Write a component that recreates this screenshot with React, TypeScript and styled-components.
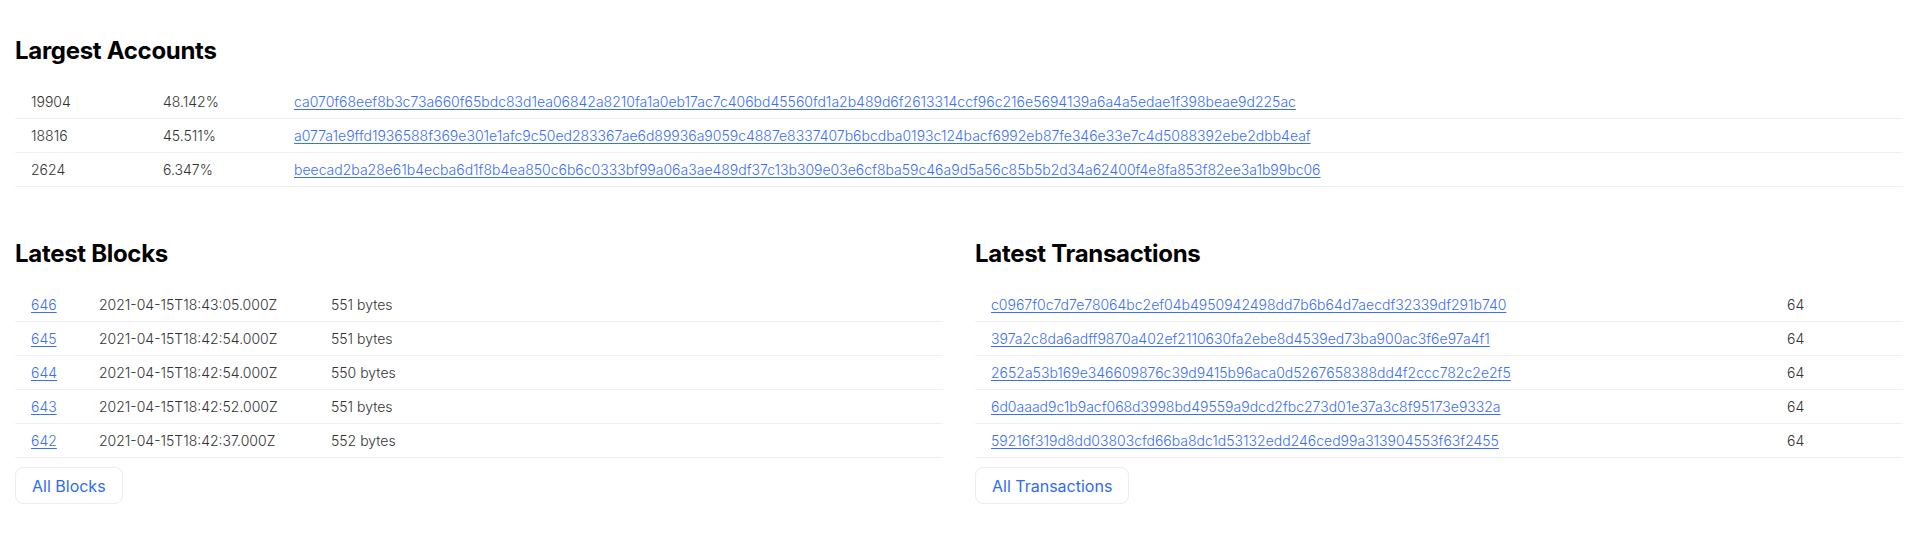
import React from "react";
import styled, { createGlobalStyle } from "styled-components";

const GlobalStyle = createGlobalStyle`
  html, body { margin: 0; padding: 0; background: #ffffff; }
  body { font-family: Inter, "Noto Sans", "Liberation Sans", sans-serif; color: #333333; }
`;

const Page = styled.main`
  padding: 36px 15px 0 15px;
  box-sizing: border-box;
  width: 100%;
`;

const Section = styled.section`
  min-width: 0;
`;

const Heading = styled.h2`
  margin: 0 0 20px 0;
  font-size: 24px;
  line-height: 29px;
  font-weight: 700;
  color: #000000;
  letter-spacing: -0.3px;
`;

const Columns = styled.div`
  display: grid;
  grid-template-columns: 1fr 1fr;
  column-gap: 32px;
  margin-top: 52px;
`;

const Row = styled.div<{ $cols: string }>`
  display: grid;
  grid-template-columns: ${(p) => p.$cols};
  height: 33px;
  align-items: center;
  border-bottom: 1px solid #efeff4;
  font-size: 14px;
  line-height: 17px;
  font-weight: 300;
  color: #333333;
`;

const Cell = styled.div`
  padding: 0 16px;
  white-space: nowrap;
  min-width: 0;
`;

const Link = styled.a`
  color: #3b6ff5;
  text-decoration: underline;
  text-underline-offset: 2px;
  cursor: pointer;
`;

const Button = styled.button`
  margin-top: 9px;
  display: inline-flex;
  align-items: center;
  height: 37px;
  padding: 0 16px;
  border: 1px solid #ececf2;
  border-radius: 8px;
  background: #ffffff;
  color: #2f6bf7;
  font-family: Inter, "Noto Sans", "Liberation Sans", sans-serif;
  font-size: 16px;
  font-weight: 400;
  cursor: pointer;
`;

const accounts = [
  ["19904", "48.142%", "ca070f68eef8b3c73a660f65bdc83d1ea06842a8210fa1a0eb17ac7c406bd45560fd1a2b489d6f2613314ccf96c216e5694139a6a4a5edae1f398beae9d225ac"],
  ["18816", "45.511%", "a077a1e9ffd1936588f369e301e1afc9c50ed283367ae6d89936a9059c4887e8337407b6bcdba0193c124bacf6992eb87fe346e33e7c4d5088392ebe2dbb4eaf"],
  ["2624", "6.347%", "beecad2ba28e61b4ecba6d1f8b4ea850c6b6c0333bf99a06a3ae489df37c13b309e03e6cf8ba59c46a9d5a56c85b5b2d34a62400f4e8fa853f82ee3a1b99bc06"],
];

const blocks = [
  ["646", "2021-04-15T18:43:05.000Z", "551 bytes"],
  ["645", "2021-04-15T18:42:54.000Z", "551 bytes"],
  ["644", "2021-04-15T18:42:54.000Z", "550 bytes"],
  ["643", "2021-04-15T18:42:52.000Z", "551 bytes"],
  ["642", "2021-04-15T18:42:37.000Z", "552 bytes"],
];

const txs = [
  "c0967f0c7d7e78064bc2ef04b4950942498dd7b6b64d7aecdf32339df291b740",
  "397a2c8da6adff9870a402ef2110630fa2ebe8d4539ed73ba900ac3f6e97a4f1",
  "2652a53b169e346609876c39d9415b96aca0d5267658388dd4f2ccc782c2e2f5",
  "6d0aaad9c1b9acf068d3998bd49559a9dcd2fbc273d01e37a3c8f95173e9332a",
  "59216f319d8dd03803cfd66ba8dc1d53132edd246ced99a313904553f63f2455",
];

export default function App() {
  return (
    <>
      <GlobalStyle />
      <Page>
        <Section>
          <Heading>Largest Accounts</Heading>
          {accounts.map(([bal, pct, addr]) => (
            <Row key={addr} $cols="132px 131px 1fr">
              <Cell>{bal}</Cell>
              <Cell>{pct}</Cell>
              <Cell>
                <Link>{addr}</Link>
              </Cell>
            </Row>
          ))}
        </Section>
        <Columns>
          <Section>
            <Heading>Latest Blocks</Heading>
            {blocks.map(([h, t, s]) => (
              <Row key={h} $cols="68px 232px 1fr">
                <Cell>
                  <Link>{h}</Link>
                </Cell>
                <Cell>{t}</Cell>
                <Cell>{s}</Cell>
              </Row>
            ))}
            <Button>All Blocks</Button>
          </Section>
          <Section>
            <Heading>Latest Transactions</Heading>
            {txs.map((id) => (
              <Row key={id} $cols="796px 1fr">
                <Cell>
                  <Link>{id}</Link>
                </Cell>
                <Cell>64</Cell>
              </Row>
            ))}
            <Button>All Transactions</Button>
          </Section>
        </Columns>
      </Page>
    </>
  );
}
